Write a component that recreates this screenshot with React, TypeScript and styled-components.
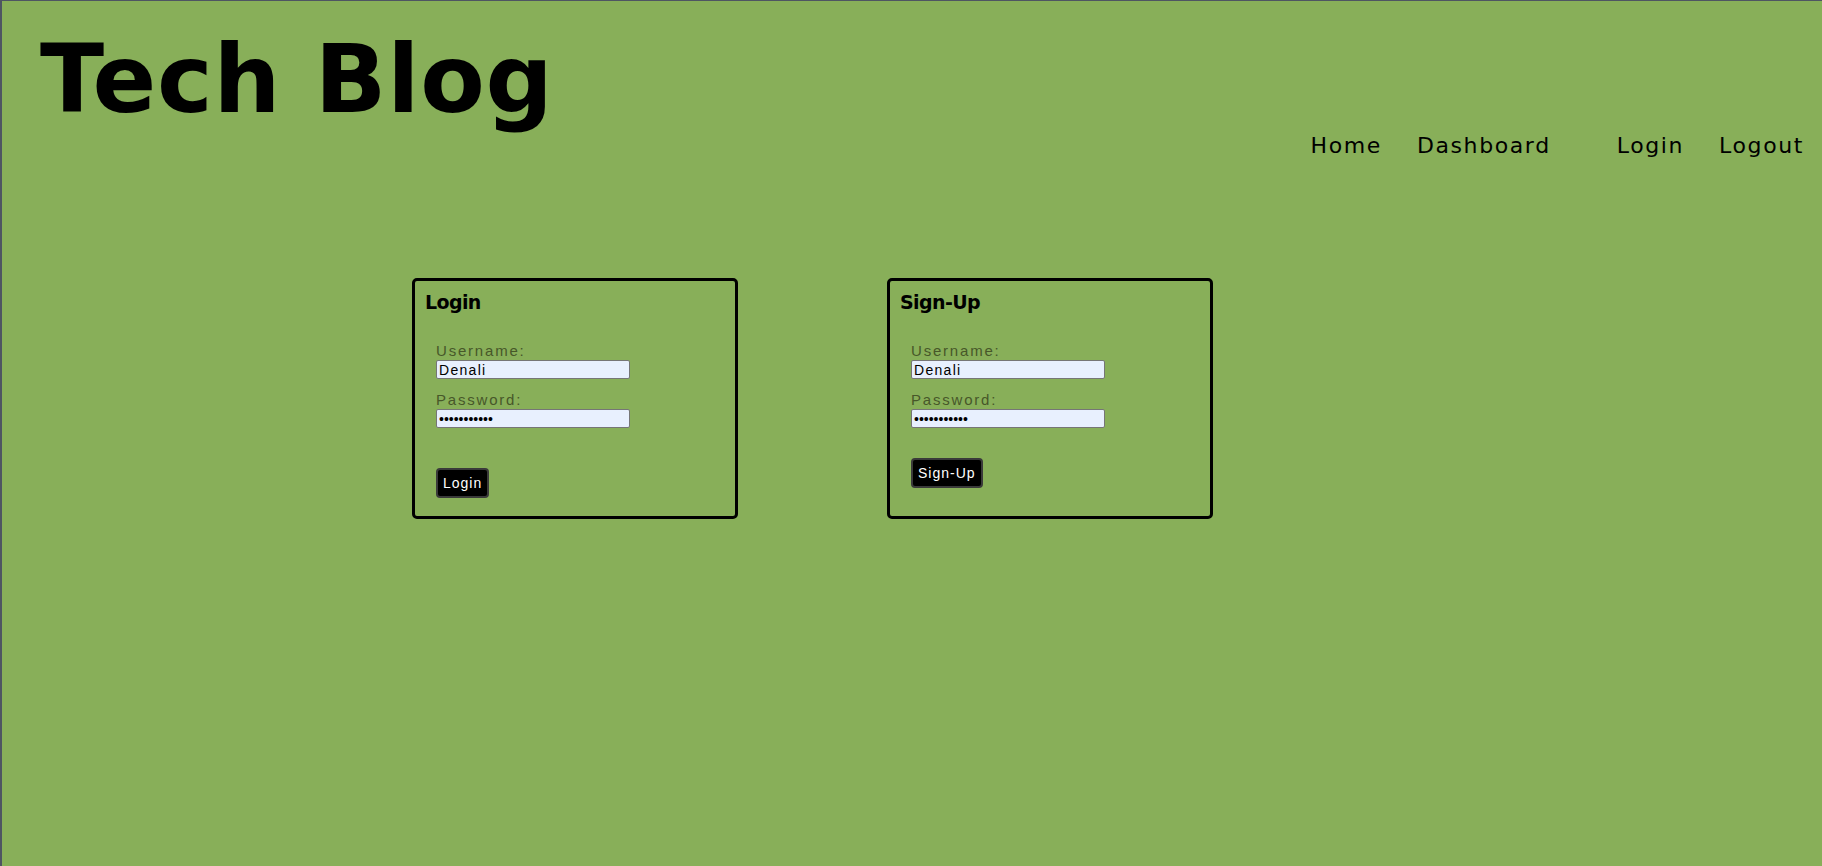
import React from "react";
import styled, { createGlobalStyle } from "styled-components";

const GlobalStyle = createGlobalStyle`
  * { box-sizing: border-box; }
  html, body { margin: 0; padding: 0; }
  body {
    background: #88af59;
    min-height: 866px;
    border-top: 1px solid #4e5562;
    border-left: 2px solid #4e5562;
    font-family: "Liberation Sans", Arial, sans-serif;
    color: #000;
  }
`;

const Header = styled.header`
  display: flex;
  justify-content: space-between;
  align-items: flex-start;
  padding: 0 18px 0 38px;
`;

const Title = styled.h1`
  margin: 32px 0 0;
  font-family: "DejaVu Sans", sans-serif;
  font-weight: 700;
  font-size: 94px;
  line-height: 1;
  letter-spacing: 0.8px;
`;

const Nav = styled.nav`
  display: flex;
  gap: 35px;
  margin-top: 132px;
`;

const NavLink = styled.a<{ $extra?: number }>`
  font-family: "DejaVu Sans", sans-serif;
  font-size: 22px;
  line-height: 26px;
  letter-spacing: 1.6px;
  color: #000;
  text-decoration: none;
  margin-right: ${(p) => p.$extra ?? 0}px;
`;

const Main = styled.main`
  display: flex;
  align-items: stretch;
  gap: 149px;
  margin: 119px 0 0 410px;
`;

const Card = styled.section`
  width: 326px;
  border: 3px solid #000;
  border-radius: 5px;
  padding: 9px 10px 18px;
  display: flex;
  flex-direction: column;
`;

const CardTitle = styled.h2`
  margin: 0;
  font-family: "DejaVu Sans", sans-serif;
  font-size: 19px;
  line-height: 24px;
  font-weight: 700;
  letter-spacing: -0.6px;
`;

const CardBody = styled.div`
  display: flex;
  flex-direction: column;
  align-items: flex-start;
  margin: 28px 0 0 11px;
`;

const Form = styled.form`
  display: flex;
  flex-direction: column;
  gap: 12px;
`;

const Field = styled.div`
  display: flex;
  flex-direction: column;
  gap: 1px;
`;

const Label = styled.label`
  display: block;
  font-size: 15px;
  line-height: 17px;
  letter-spacing: 1.8px;
  color: #475729;
`;

const Input = styled.input<{ $spaced?: boolean }>`
  width: 194px;
  height: 19px;
  margin: 0;
  padding: 0 2px;
  border: 1px solid #767676;
  border-radius: 2px;
  background: #e8f0fe;
  font-family: "Liberation Sans", Arial, sans-serif;
  font-size: 14px;
  letter-spacing: ${(p) => (p.$spaced ? "1.3px" : "0")};
  color: #000;
  outline: none;
`;

const Button = styled.button<{ $top: number }>`
  margin-top: ${(p) => p.$top}px;
  height: 30px;
  padding: 0 5px;
  background: #000;
  color: #fff;
  border: 2px solid #3a3a3a;
  border-radius: 4px;
  font-family: "Liberation Sans", Arial, sans-serif;
  font-size: 14px;
  letter-spacing: 1px;
  cursor: pointer;
`;

const AuthCard: React.FC<{ title: string; button: string; buttonTop: number; id: string }> = ({
  title,
  button,
  buttonTop,
  id,
}) => (
  <Card>
    <CardTitle>{title}</CardTitle>
    <CardBody>
      <Form onSubmit={(e) => e.preventDefault()}>
        <Field>
          <Label htmlFor={`${id}-user`}>Username:</Label>
          <Input id={`${id}-user`} type="text" defaultValue="Denali" $spaced />
        </Field>
        <Field>
          <Label htmlFor={`${id}-pass`}>Password:</Label>
          <Input id={`${id}-pass`} type="password" defaultValue="password123" />
        </Field>
      </Form>
      <Button $top={buttonTop} type="button">
        {button}
      </Button>
    </CardBody>
  </Card>
);

export default function App() {
  return (
    <>
      <GlobalStyle />
      <Header>
        <Title>Tech Blog</Title>
        <Nav>
          <NavLink href="#">Home</NavLink>
          <NavLink href="#" $extra={31}>
            Dashboard
          </NavLink>
          <NavLink href="#">Login</NavLink>
          <NavLink href="#">Logout</NavLink>
        </Nav>
      </Header>
      <Main>
        <AuthCard id="login" title="Login" button="Login" buttonTop={40} />
        <AuthCard id="signup" title="Sign-Up" button="Sign-Up" buttonTop={30} />
      </Main>
    </>
  );
}
